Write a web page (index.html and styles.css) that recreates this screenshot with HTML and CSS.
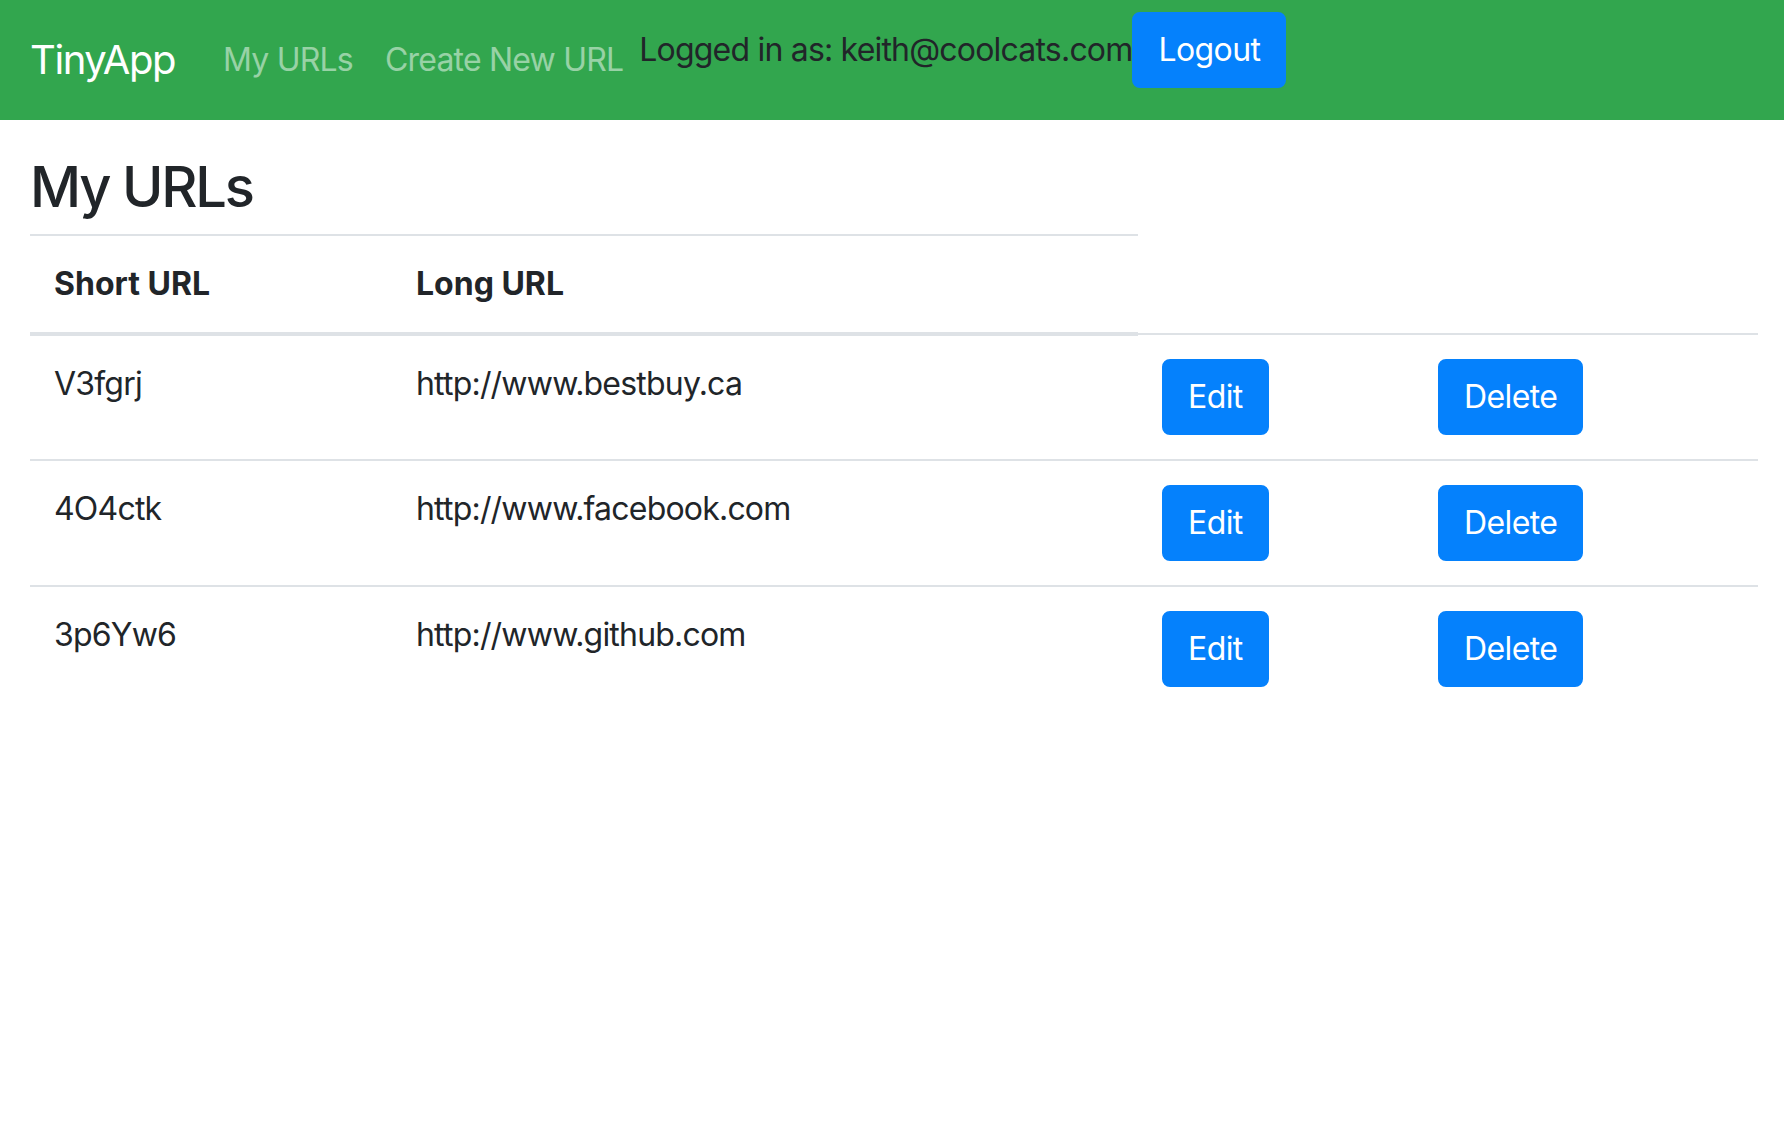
FILE: index.html
```html
<!DOCTYPE html>
<html lang="en">
<head>
<meta charset="utf-8">
<title>TinyApp</title>
<link rel="stylesheet" href="styles.css">
</head>
<body>
<nav class="navbar">
  <a class="brand" href="#">TinyApp</a>
  <ul class="nav">
    <li><a class="nav-link" href="#">My URLs</a></li>
    <li><a class="nav-link" href="#">Create New URL</a></li>
  </ul>
  <div class="user">
    <span class="user-text">Logged in as: keith@coolcats.com</span>
    <button class="btn">Logout</button>
  </div>
</nav>
<main class="content">
  <h2 class="title">My URLs</h2>
  <table class="url-table">
    <colgroup>
      <col class="col-short">
      <col class="col-long">
      <col class="col-edit">
      <col class="col-delete">
    </colgroup>
    <thead>
      <tr><th>Short URL</th><th>Long URL</th></tr>
    </thead>
    <tbody>
      <tr>
        <td>V3fgrj</td>
        <td>http://www.bestbuy.ca</td>
        <td><button class="btn">Edit</button></td>
        <td><button class="btn">Delete</button></td>
      </tr>
      <tr>
        <td>4O4ctk</td>
        <td>http://www.facebook.com</td>
        <td><button class="btn">Edit</button></td>
        <td><button class="btn">Delete</button></td>
      </tr>
      <tr>
        <td>3p6Yw6</td>
        <td>http://www.github.com</td>
        <td><button class="btn">Edit</button></td>
        <td><button class="btn">Delete</button></td>
      </tr>
    </tbody>
  </table>
</main>
</body>
</html>
```
FILE: styles.css
```css
html, body {
  margin: 0;
  padding: 0;
  background: #ffffff;
}
body {
  font-family: "Inter", "Liberation Sans", sans-serif;
  font-size: 32px;
  line-height: 1.5;
  letter-spacing: -0.8px;
  color: #212529;
}
.navbar {
  display: flex;
  align-items: center;
  height: 120px;
  box-sizing: border-box;
  padding: 0 32px 0 30px;
  background: #32a64e;
}
.brand {
  font-size: 40px;
  line-height: 60px;
  letter-spacing: -1.4px;
  padding: 10px 0;
  margin-right: 32px;
  color: #ffffff;
  text-decoration: none;
}
.nav {
  display: flex;
  list-style: none;
  margin: 0;
  padding: 0;
}
.nav-link {
  display: block;
  padding: 16px;
  color: rgba(255, 255, 255, 0.5);
  text-decoration: none;
}
.user {
  display: flex;
  align-items: center;
  margin-bottom: 20px;
}
.user-text {
  color: #212529;
}
.btn {
  font-family: inherit;
  font-size: 32px;
  line-height: 48px;
  letter-spacing: -0.6px;
  padding: 12px 24px;
  border: 2px solid #0581fc;
  border-radius: 8px;
  background: #0581fc;
  color: #ffffff;
  cursor: pointer;
}
.content {
  padding: 34px 26px 0 30px;
}
.title {
  font-size: 56px;
  font-weight: 500;
  line-height: 1.2;
  letter-spacing: -2.2px;
  margin: 0 0 13px 0;
}
.url-table {
  width: 100%;
  border-collapse: collapse;
  table-layout: fixed;
}
.col-short { width: 362px; }
.col-long { width: 746px; }
.col-edit { width: 276px; }
.url-table th,
.url-table td {
  padding: 24px;
  text-align: left;
  vertical-align: top;
  border-top: 2px solid #dee2e6;
}
.url-table th {
  font-weight: 700;
  letter-spacing: 0;
  vertical-align: bottom;
  border-bottom: 4px solid #dee2e6;
}
```
